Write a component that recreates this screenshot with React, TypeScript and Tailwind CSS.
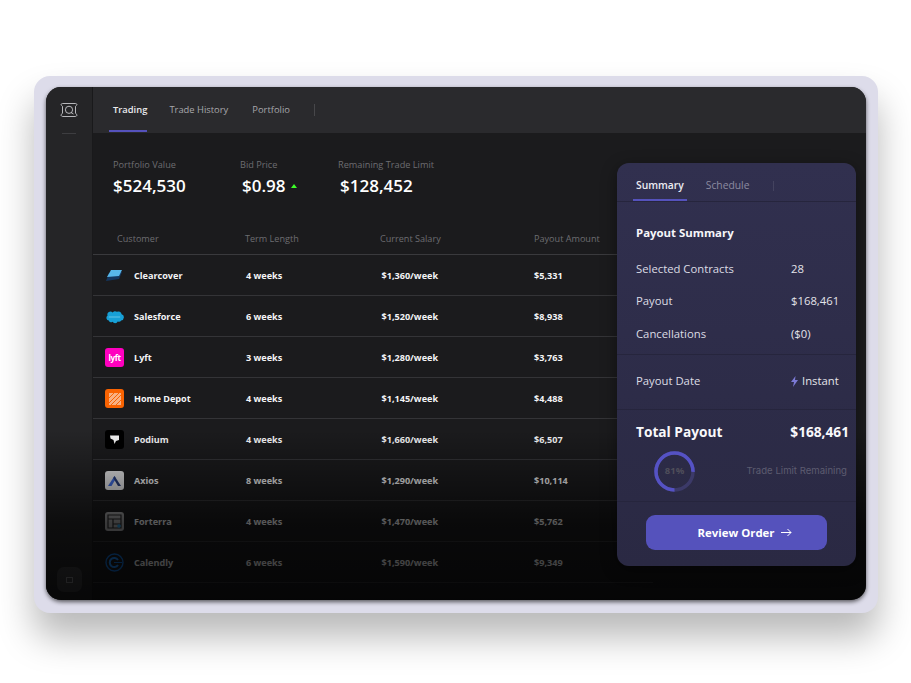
import React from "react";

const font = { fontFamily: '"Open Sans", "Noto Sans", sans-serif' };

function Logo({ name }: { name: string }) {
  if (name === "Clearcover")
    return (
      <svg width="19" height="14" viewBox="0 0 19 14">
        <path d="M4 4 L17 3 L14 10 L1 12 Z" fill="#14365f" />
        <path d="M6 1 L17 1 L14 7 L2 8 Z" fill="#58b7ea" />
      </svg>
    );
  if (name === "Salesforce")
    return (
      <svg width="19" height="14" viewBox="0 0 20 14">
        <path d="M8 2.2a3 3 0 0 1 4.5-.6A3.4 3.4 0 0 1 17.5 4 3.4 3.4 0 0 1 17 10.6a2.7 2.7 0 0 1-3.6 1.1A3 3 0 0 1 8 12a2.8 2.8 0 0 1-4-1.4A2.8 2.8 0 0 1 2.7 5.5 3.2 3.2 0 0 1 8 2.2Z" fill="#17a0d6" />
        <path d="M4 7h12" stroke="#9fdcf0" strokeWidth="0.6" />
      </svg>
    );
  if (name === "Lyft")
    return (
      <div className="flex h-[19px] w-[19px] items-center justify-center rounded-[3px] bg-[#ff00bf] text-[8px] font-bold leading-none tracking-tighter text-white">
        lyft
      </div>
    );
  if (name === "Home Depot")
    return (
      <div className="flex h-[19px] w-[19px] items-center justify-center rounded-[3px] bg-[#f96302]">
        <svg width="12" height="12" viewBox="0 0 12 12">
          <rect width="12" height="12" fill="#f9b183" />
          <path d="M0 10 10 0M2 12 12 2M0 5 5 0M7 12 12 7" stroke="#f96302" strokeWidth="1" />
        </svg>
      </div>
    );
  if (name === "Podium")
    return (
      <div className="flex h-[19px] w-[19px] items-center justify-center rounded-[3px] bg-black">
        <svg width="11" height="11" viewBox="0 0 11 11">
          <path d="M1 1.5h9v4.5L7 7 5.5 10 4.5 6 1.5 4.5Z" fill="#f3f3f3" />
        </svg>
      </div>
    );
  if (name === "Axios")
    return (
      <div className="flex h-[19px] w-[19px] items-center justify-center rounded-[3px] bg-[#e8e8ea]">
        <svg width="15" height="12" viewBox="0 0 15 12">
          <path d="M1 11 7.5 1 9 3.5 4.5 11Z" fill="#3f6ce0" />
          <path d="M7.5 1 14 11 11 11 6.2 3Z" fill="#2a3f7c" />
        </svg>
      </div>
    );
  if (name === "Forterra")
    return (
      <div className="flex h-[19px] w-[19px] items-center justify-center rounded-[3px] bg-[#a4a4a6]">
        <svg width="15" height="15" viewBox="0 0 15 15" fill="none">
          <path d="M1 1h13v13H1ZM1 5h13M6 5v9M6 10h8" stroke="#2a2a2c" strokeWidth="1.2" />
          <circle cx="12" cy="12" r="1.8" fill="#2d9bdc" />
        </svg>
      </div>
    );
  return (
    <svg width="19" height="19" viewBox="0 0 19 19" fill="none">
      <circle cx="9.5" cy="9.5" r="8.5" stroke="#1170d8" strokeWidth="1.4" />
      <path d="M13 7a4.5 4.5 0 1 0 0 5" stroke="#1d88f5" strokeWidth="2" />
      <path d="M9 9.5h8" stroke="#1170d8" strokeWidth="1" />
    </svg>
  );
}

const rows = [
  ["Clearcover", "4 weeks", "$1,360/week", "$5,331"],
  ["Salesforce", "6 weeks", "$1,520/week", "$8,938"],
  ["Lyft", "3 weeks", "$1,280/week", "$3,763"],
  ["Home Depot", "4 weeks", "$1,145/week", "$4,488"],
  ["Podium", "4 weeks", "$1,660/week", "$6,507"],
  ["Axios", "8 weeks", "$1,290/week", "$10,114"],
  ["Forterra", "4 weeks", "$1,470/week", "$5,762"],
  ["Calendly", "6 weeks", "$1,590/week", "$9,349"],
];

function SummaryRow({ label, value }: { label: string; value: React.ReactNode }) {
  return (
    <div className="flex h-[32.5px] items-center">
      <span className="w-[155px] text-[11.3px] text-[#dcdce4]">{label}</span>
      <span className="text-[11.3px] text-[#e4e4ea]">{value}</span>
    </div>
  );
}

export default function App() {
  return (
    <div className="h-[683px] w-[911px] overflow-hidden bg-white pl-[34px] pt-[76px]" style={font}>
      <div className="h-[537px] w-[844px] rounded-[16px] bg-[#dddcea] px-[12px] pb-[13px] pt-[11px] shadow-[0_24px_36px_rgba(0,0,0,0.28)]">
        <div className="relative flex h-[513px] w-[820px] overflow-hidden rounded-[15px] bg-[#1b1b1d] shadow-[0_2px_4px_rgba(0,0,0,0.6)]">
          <aside className="flex w-[47px] shrink-0 flex-col items-center border-r border-[#19191b] bg-[#252527]">
            <div className="flex h-[46px] items-center justify-center">
              <svg width="18" height="16" viewBox="0 0 18 16" fill="none" stroke="#c8c8cc" strokeWidth="0.9">
                <path d="M3 1.5h12c1 0 2 .5 2 1.2s-1.5 1-1.5 1.8v6.5c0 1 1.5 1.2 1.5 2s-1 1.5-2 1.5H3c-1 0-2-.5-2-1.5s1.5-1 1.5-2V4.5c0-.8-1.5-1-1.5-1.8S2 1.5 3 1.5Z" />
                <circle cx="9" cy="7.8" r="3.6" />
                <path d="M11 10.5l2.5 1.5" />
              </svg>
            </div>
            <div className="h-px w-[14px] bg-[#3d3d40]" />
            <div className="mt-auto mb-[8px] flex h-[25px] w-[25px] items-center justify-center rounded-[7px] bg-[#3f3f42]">
              <div className="h-[6px] w-[7px] border border-[#88888c]" />
            </div>
          </aside>
          <main className="flex min-w-0 flex-1 flex-col">
            <nav className="flex h-[46px] shrink-0 items-center bg-[#2a2a2d] pl-[20px] text-[9.4px]">
              <span className="relative font-semibold text-[#ebebee]">
                Trading
                <span className="absolute -left-[4px] right-0 top-[27px] h-[2px] bg-[#5552bc]" />
              </span>
              <span className="ml-[22px] text-[#a7a7ab]">Trade History</span>
              <span className="ml-[24px] text-[#a7a7ab]">Portfolio</span>
              <span className="ml-[24px] h-[12px] w-px bg-[#47474a]" />
            </nav>
            <section className="flex pl-[20px] pt-[24px]">
              <div className="w-[126px]">
                <div className="text-[9.2px] leading-[16px] text-[#6d6d71]">Portfolio Value</div>
                <div className="text-[17px] font-semibold leading-[26px] text-white">$524,530</div>
              </div>
              <div className="w-[98px] pl-[1px]">
                <div className="text-[9.2px] leading-[16px] text-[#6d6d71]">Bid Price</div>
                <div className="flex items-center pl-[2px] text-[17px] font-semibold leading-[26px] text-white">
                  $0.98
                  <span className="ml-[5px] h-0 w-0 border-x-[3px] border-b-[4px] border-x-transparent border-b-[#3dff28]" />
                </div>
              </div>
              <div className="pl-[1px]">
                <div className="text-[9.2px] leading-[16px] text-[#6d6d71]">Remaining Trade Limit</div>
                <div className="pl-[2px] text-[17px] font-semibold leading-[26px] text-white">$128,452</div>
              </div>
            </section>
            <section className="mt-[30px] w-[560px] text-[9.1px] font-bold text-[#f4f4f6]">
              <div className="flex h-[26px] items-center border-b border-[#3a3a3d] pb-[5px] pl-[24px] font-normal text-[#6d6d71]">
                <span className="w-[128px]">Customer</span>
                <span className="w-[135px]">Term Length</span>
                <span className="w-[154px]">Current Salary</span>
                <span>Payout Amount</span>
              </div>
              {rows.map((r) => (
                <div key={r[0]} className="flex h-[41px] items-center border-b border-[#343437] pl-[12px] pt-[1px]">
                  <span className="flex w-[29px] justify-center pr-[10px]">
                    <Logo name={r[0]} />
                  </span>
                  <span className="w-[112px]">{r[0]}</span>
                  <span className="w-[135px]">{r[1]}</span>
                  <span className="w-[153px] pl-[0.5px]">{r[2]}</span>
                  <span>{r[3]}</span>
                </div>
              ))}
            </section>
          </main>
          <div className="pointer-events-none absolute inset-x-0 bottom-0 h-[170px] bg-gradient-to-b from-transparent via-[#000000a6] via-55% to-[#000000cc]" />
          <aside className="absolute right-[10px] top-[76px] flex h-[403px] w-[239px] flex-col overflow-hidden rounded-[12px] bg-gradient-to-b from-[#31304f] to-[#2a2943] shadow-[0_4px_16px_rgba(0,0,0,0.4)]">
            <div className="flex h-[39px] shrink-0 items-center border-b border-[#26253d] pl-[19px] pt-[8px] text-[10.3px]">
              <span className="relative font-semibold text-[#ebebf2]">
                Summary
                <span className="absolute -left-[3px] -right-[3px] top-[21px] h-[2px] bg-[#5552bc]" />
              </span>
              <span className="ml-[22px] text-[#8c8ba0]">Schedule</span>
              <span className="ml-[24px] h-[10px] w-px bg-[#44435f]" />
            </div>
            <div className="h-[153px] shrink-0 border-b border-[#26253d] pl-[19px] pt-[21px]">
              <div className="mb-[10px] text-[11.4px] font-bold leading-[20px] text-[#f6f6fa]">Payout Summary</div>
              <SummaryRow label="Selected Contracts" value="28" />
              <SummaryRow label="Payout" value="$168,461" />
              <SummaryRow label="Cancellations" value="($0)" />
            </div>
            <div className="flex h-[55px] shrink-0 items-center border-b border-[#26253d] pb-[2px] pl-[19px]">
              <span className="w-[155px] text-[11.3px] text-[#dcdce4]">Payout Date</span>
              <span className="flex items-center gap-[4px] text-[11.3px] text-[#e4e4ea]">
                <svg width="7" height="11" viewBox="0 0 7 11">
                  <path d="M4.5 0 0 6h3l-1 5L7 4H4Z" fill="#7c7ad6" />
                </svg>
                Instant
              </span>
            </div>
            <div className="h-[92px] shrink-0 border-b border-[#26253d] pl-[19px]">
              <div className="flex items-center justify-between pr-[7px] pt-[12px] text-[13.7px] font-bold leading-[20px] text-[#f8f8fb]">
                <span>Total Payout</span>
                <span>$168,461</span>
              </div>
              <div className="mt-[9px] flex items-center justify-between pr-[9px]">
                <div className="relative ml-[18px] flex h-[41px] w-[41px] items-center justify-center">
                  <svg width="41" height="41" viewBox="0 0 41 41" className="absolute inset-0" fill="none">
                    <circle cx="20.5" cy="20.5" r="18.5" stroke="#3c3a69" strokeWidth="3.5" />
                    <circle cx="20.5" cy="20.5" r="18.5" stroke="#5552c4" strokeWidth="3.5" strokeDasharray="87 200" transform="rotate(90 20.5 20.5)" />
                  </svg>
                  <span className="text-[9.5px] font-bold text-[#4f4e5a]">81%</span>
                </div>
                <span className="text-[9.6px] text-[#5d5c70]" style={{ fontFamily: '"Inter", sans-serif' }}>
                  Trade Limit Remaining
                </span>
              </div>
            </div>
            <div className="flex flex-1 items-start justify-center pt-[13px]">
              <button className="flex h-[35px] w-[181px] items-center justify-center gap-[6px] rounded-[9px] bg-[#5552bc] pl-[16px] text-[11.4px] font-bold text-white">
                Review Order
                <svg width="11" height="9" viewBox="0 0 11 9" fill="none" stroke="white" strokeWidth="1">
                  <path d="M0 4.5h10M6.5 1l3.5 3.5L6.5 8" />
                </svg>
              </button>
            </div>
          </aside>
        </div>
      </div>
    </div>
  );
}
